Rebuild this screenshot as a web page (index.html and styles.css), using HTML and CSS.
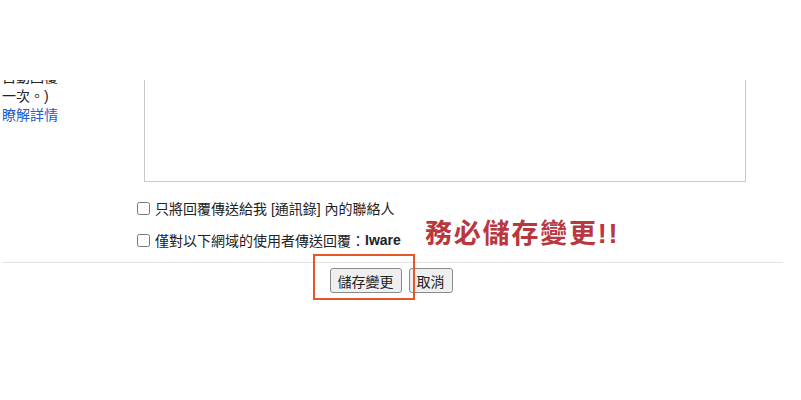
FILE: index.html
```html
<!DOCTYPE html>
<html lang="zh-Hant">
<head>
    <meta charset="UTF-8">
    <meta name="viewport" content="width=device-width, initial-scale=1.0">
    <title>自動回覆設定</title>
    <link rel="stylesheet" href="styles.css">
</head>
<body>
    <div class="page">
        <div class="clip">
            <div class="reply-row">
                <div class="hint">
                    自動回覆<br>
                    一次。)<br>
                    <a href="#">瞭解詳情</a>
                </div>
                <textarea class="reply-text"></textarea>
            </div>
        </div>

        <div class="options">
            <label class="option"><input type="checkbox">只將回覆傳送給我 [通訊錄] 內的聯絡人</label>
            <label class="option"><input type="checkbox">僅對以下網域的使用者傳送回覆：<b>Iware</b></label>
        </div>

        <div class="actions">
            <button type="button">儲存變更</button>
            <button type="button">取消</button>
        </div>

        <!-- 標註 -->
        <div class="note">務必儲存變更!!</div>
        <div class="highlight"></div>
    </div>
</body>
</html>
```

FILE: styles.css
```css
body {
    margin: 0;
    padding: 0;
    background-color: #fff;
    color: #222;
    font-family: "Liberation Sans", "Noto Sans CJK TC", sans-serif;
    font-size: 14px;
}

.page {
    position: relative;
    width: 801px;
    height: 400px;
    overflow: hidden;
}

.clip {
    margin-top: 80px;
    height: 102px;
    overflow: hidden;
}

.reply-row {
    margin-top: -50px;
    display: grid;
    grid-template-columns: 144px 602px;
}

.hint {
    padding: 38px 0 0 2px;
    line-height: 19px;
    font-size: 14px;
    white-space: nowrap;
}

.hint a {
    color: #1d5bcc;
    text-decoration: none;
}

.reply-text {
    box-sizing: border-box;
    width: 602px;
    height: 152px;
    margin: 0;
    border: 1px solid #c8c8c8;
    resize: none;
    outline: none;
}

.options {
    padding-top: 10px;
}

.option {
    display: flex;
    align-items: center;
    height: 32px;
    padding-left: 137px;
    font-size: 14px;
}

.option input {
    width: 13px;
    height: 13px;
    margin: 0 5px 0 0;
}

.option b {
    font-weight: bold;
}

.actions {
    display: flex;
    justify-content: center;
    gap: 7px;
    margin: 6px 18px 0 2px;
    padding: 5px 3px 0 0;
    border-top: 1px solid #e3e3e3;
}

.actions button {
    height: 25px;
    padding: 0 7px;
    border: 1px solid #8a8a8a;
    border-radius: 3px;
    background-color: #efefef;
    color: #222;
    font-family: "Liberation Sans", "Noto Sans CJK TC", sans-serif;
    font-size: 14px;
}

.note {
    position: absolute;
    left: 425px;
    top: 221px;
    color: #b8383f;
    font-size: 27px;
    font-weight: bold;
    line-height: 1;
    letter-spacing: 1.8px;
    white-space: nowrap;
}

.highlight {
    position: absolute;
    left: 313px;
    top: 254px;
    width: 98px;
    height: 42px;
    border: 2px solid #e6562b;
}
```
